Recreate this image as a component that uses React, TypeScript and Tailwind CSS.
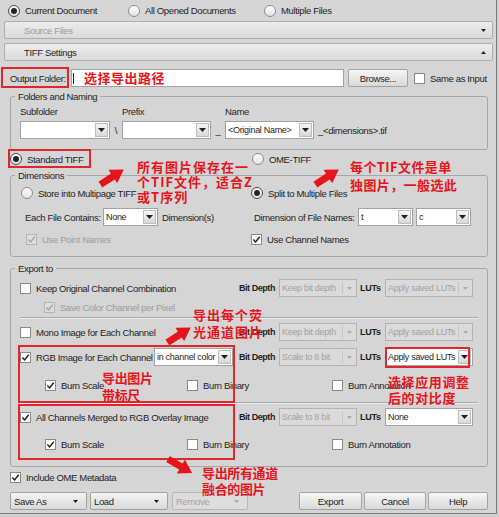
import React from "react";

const cjk = "font-['Noto_Sans_CJK_SC',sans-serif]";

function Tri({ up, color = "#1f1f1f", small }: { up?: boolean; color?: string; small?: boolean }) {
  const w = small ? 5 : 7;
  const h = small ? 3 : 4;
  return (
    <svg width={w} height={h} viewBox={`0 0 ${w} ${h}`}>
      <path d={up ? `M0 ${h}h${w}L${w / 2} 0z` : `M0 0h${w}L${w / 2} ${h}z`} fill={color} />
    </svg>
  );
}

function Radio({ checked, label, className = "" }: { checked?: boolean; label: string; className?: string }) {
  return (
    <div className={`flex items-center gap-[5px] ${className}`}>
      <span
        className={`flex h-[12px] w-[12px] shrink-0 items-center justify-center rounded-full border bg-gradient-to-b from-white to-[#e2e2e2] ${
          checked ? "border-[#4b4b4b]" : "border-[#8e8e8e]"
        }`}
      >
        {checked && <span className="h-[6px] w-[6px] rounded-full bg-[#252525]" />}
      </span>
      <span className="whitespace-nowrap">{label}</span>
    </div>
  );
}

function Check({
  checked,
  disabled,
  label,
  className = "",
}: {
  checked?: boolean;
  disabled?: boolean;
  label: string;
  className?: string;
}) {
  return (
    <div className={`flex h-[12px] items-center gap-[5px] ${className}`}>
      <span
        className={`flex h-[11px] w-[11px] shrink-0 items-center justify-center border ${
          disabled ? "border-[#b5b5b5] bg-[#dddddd]" : "border-[#8a8a8a] bg-white"
        }`}
      >
        {checked && (
          <svg width="9" height="9" viewBox="0 0 9 9">
            <path
              d="M1.4 4.6 3.6 6.9 7.7 1.7"
              fill="none"
              stroke={disabled ? "#a5a5a5" : "#1c1c1c"}
              strokeWidth="1.4"
            />
          </svg>
        )}
      </span>
      <span className={`whitespace-nowrap ${disabled ? "text-[#9d9d9d]" : ""}`}>{label}</span>
    </div>
  );
}

// editable combo: white field + raised button
function Combo({ value, w }: { value: string; w: string }) {
  return (
    <div className={`flex h-[18px] shrink-0 items-stretch border border-[#a2a2a2] bg-white ${w}`}>
      <span className="flex flex-1 items-center overflow-hidden whitespace-nowrap pl-[2px] text-[9px] tracking-[-0.3px]">
        {value}
      </span>
      <span className="m-px flex w-[13px] items-center justify-center border border-[#bdbdbd] bg-gradient-to-b from-[#f6f6f6] to-[#d8d8d8]">
        <Tri />
      </span>
    </div>
  );
}

function DisCombo({ value, w }: { value: string; w: string }) {
  return (
    <div className={`flex h-[18px] shrink-0 items-center border border-[#b3b3b3] bg-[#dadada] text-[#a2a2a2] ${w}`}>
      <span className="flex-1 overflow-hidden whitespace-nowrap pl-[2px] text-[9px] tracking-[-0.3px]">{value}</span>
      <span className="mr-[4px] flex items-center gap-[4px]">
        <span className="h-[12px] w-px bg-[#c6c6c6]" />
        <Tri color="#a9a9a9" small />
      </span>
    </div>
  );
}

function Btn({ children, w, className = "" }: { children: React.ReactNode; w: string; className?: string }) {
  return (
    <div
      className={`flex h-[18px] shrink-0 items-center justify-center rounded-[2px] border border-[#a3a3a3] bg-gradient-to-b from-[#f6f6f6] to-[#d9d9d9] ${w} ${className}`}
    >
      {children}
    </div>
  );
}

function DropBtn({ label, w, disabled, className = "" }: { label: string; w: string; disabled?: boolean; className?: string }) {
  return (
    <div
      className={`flex h-[18px] shrink-0 items-center justify-between rounded-[2px] border pl-[3px] pr-[8px] ${
        disabled
          ? "border-[#b8b8b8] bg-[#dcdcdc] text-[#a4a4a4]"
          : "border-[#a3a3a3] bg-gradient-to-b from-[#f4f4f4] to-[#d9d9d9]"
      } ${w} ${className}`}
    >
      <span>{label}</span>
      <Tri small color={disabled ? "#a8a8a8" : "#1f1f1f"} />
    </div>
  );
}

function BitLuts({ enabled, depth, luts }: { enabled?: boolean; depth: string; luts: string }) {
  return (
    <div className="flex items-center">
      <span className="w-[40px] whitespace-nowrap text-[9px] font-bold tracking-[-0.45px]">Bit Depth</span>
      <DisCombo value={depth} w="w-[78px]" />
      <span className="ml-[3px] w-[25px] text-[9px] font-bold tracking-[-0.3px]">LUTs</span>
      {enabled ? <Combo value={luts} w="w-[88px]" /> : <DisCombo value={luts} w="w-[88px]" />}
    </div>
  );
}

function BurnRow() {
  return (
    <div className="flex h-[12px] items-center pl-[25px]">
      <div className="w-[142px]">
        <Check checked label="Burn Scale" />
      </div>
      <div className="w-[145px]">
        <Check label="Burn Binary" />
      </div>
      <Check label="Burn Annotation" />
    </div>
  );
}

function Separator({ className = "" }: { className?: string }) {
  return <div className={`h-[2px] border-t border-[#a9a9a9] bg-[#ececec] ${className}`} />;
}

function Arrow({ left, top, rot }: { left: number; top: number; rot: string }) {
  return (
    <svg width="28" height="16" viewBox="0 0 28 16" className={`absolute ${rot}`} style={{ left, top }}>
      <polygon points="0,4.5 15,4.5 15,0 28,8 15,16 15,11.5 0,11.5" fill="#e8141c" />
    </svg>
  );
}

export default function App() {
  return (
    <div className="h-[517px] w-[499px] bg-[#cfcfcf]">
      <div className="relative h-[514px] w-[497px] overflow-hidden border-r border-b border-[#7c7c7c] bg-[#d5d5d5] font-['Liberation_Sans',Arial,sans-serif] text-[9.5px] leading-[11px] tracking-[-0.35px] text-[#1e1e1e]">
        {/* document scope */}
        <div className="flex h-[21px] items-center pl-[8px]">
          <Radio checked label="Current Document" className="w-[120px]" />
          <Radio label="All Opened Documents" className="w-[136px]" />
          <Radio label="Multiple Files" />
        </div>

        <div className="mx-[4px] flex h-[18px] w-[489px] items-center justify-between rounded-[2px] border border-[#adadad] bg-gradient-to-b from-[#ececec] to-[#dadada] pl-[19px] pr-[6px]">
          <span className="text-[#9b9b9b]">Source Files</span>
          <Tri small />
        </div>
        <div className="mx-[4px] mt-[4px] flex h-[18px] w-[489px] items-center justify-between rounded-[2px] border border-[#adadad] bg-gradient-to-b from-[#ececec] to-[#dadada] pl-[19px] pr-[6px]">
          <span>TIFF Settings</span>
          <Tri small up />
        </div>

        {/* output folder */}
        <div className="mt-[8px] flex h-[18px] items-center">
          <span className="w-[71px] whitespace-nowrap pl-[10px]">Output Folder:</span>
          <div className="flex h-[18px] w-[273px] items-center border border-[#a2a2a2] bg-white">
            <span className="ml-px h-[11px] w-px bg-[#222]" />
          </div>
          <Btn w="w-[60px]" className="ml-[4px]">
            Browse...
          </Btn>
          <Check label="Same as Input" className="ml-[6px]" />
        </div>

        {/* folders and naming */}
        <fieldset className="mx-[10px] mt-[4px] w-[478px] rounded-[3px] border border-[#a7a7a7] px-[9px] pb-[10px]">
          <legend className="-ml-[5px] px-[3px] leading-[11px]">Folders and Naming</legend>
          <div className="mt-[4px] flex">
            <span className="w-[102px]">Subfolder</span>
            <span className="w-[103px]">Prefix</span>
            <span>Name</span>
          </div>
          <div className="mt-[4px] flex items-center">
            <Combo value="" w="w-[90px]" />
            <span className="w-[12px] text-center">\</span>
            <Combo value="" w="w-[89px]" />
            <span className="w-[14px] text-center">_</span>
            <Combo value="<Original Name>" w="w-[89px]" />
            <span className="ml-[4px]">_&lt;dimensions&gt;.tif</span>
          </div>
        </fieldset>

        {/* tiff type */}
        <div className="mt-[1px] flex h-[16px] items-center pl-[10px]">
          <Radio checked label="Standard TIFF" className="w-[242px]" />
          <Radio label="OME-TIFF" />
        </div>

        {/* dimensions */}
        <fieldset className="mx-[10px] mt-[3px] w-[478px] rounded-[3px] border border-[#a7a7a7] pl-[10px] pr-[9px] pb-[11px]">
          <legend className="-ml-[6px] px-[3px] leading-[11px]">Dimensions</legend>
          <div className="mt-[4px] flex h-[16px] items-center">
            <Radio label="Store into Multipage TIFF" className="w-[230px]" />
            <Radio checked label="Split to Multiple Files" />
          </div>
          <div className="mt-[7px] flex h-[18px] items-center">
            <div className="flex w-[230px] items-center">
              <span className="w-[82px] whitespace-nowrap pl-[4px]">Each File Contains:</span>
              <Combo value="None" w="w-[55px]" />
              <span className="ml-[4px]">Dimension(s)</span>
            </div>
            <span className="w-[107px] whitespace-nowrap pl-[3px]">Dimension of File Names:</span>
            <Combo value="t" w="w-[55px]" />
            <div className="ml-[3px]">
              <Combo value="c" w="w-[55px]" />
            </div>
          </div>
          <div className="mt-[7px] flex h-[12px] items-center">
            <div className="w-[230px] pl-[5px]">
              <Check checked disabled label="Use Point Names" />
            </div>
            <Check checked label="Use Channel Names" />
          </div>
        </fieldset>

        {/* export to */}
        <fieldset className="mx-[10px] mt-[6px] w-[478px] rounded-[3px] border border-[#a7a7a7] px-[9px] pb-[16px]">
          <legend className="-ml-[5px] px-[3px] leading-[11px]">Export to</legend>

          <div className="mt-[5px] flex h-[18px] items-center">
            <div className="w-[219px]">
              <Check label="Keep Original Channel Combination" />
            </div>
            <BitLuts depth="Keep bit depth" luts="Apply saved LUTs" />
          </div>
          <Check checked disabled label="Save Color Channel per Pixel" className="mt-[4px] pl-[24px]" />
          <Separator className="mt-[4px]" />

          <div className="mt-[4px] flex h-[18px] items-center">
            <div className="w-[219px]">
              <Check label="Mono Image for Each Channel" />
            </div>
            <BitLuts depth="Keep bit depth" luts="Apply saved LUTs" />
          </div>

          <div className="mt-[7px] flex h-[18px] items-center">
            <div className="flex w-[219px] items-center justify-between pr-[6px]">
              <Check checked label="RGB Image for Each Channel" />
              <Combo value="in channel color" w="w-[79px]" />
            </div>
            <BitLuts enabled depth="Scale to 8 bit" luts="Apply saved LUTs" />
          </div>
          <div className="mt-[13px]">
            <BurnRow />
          </div>
          <Separator className="mt-[11px]" />

          <div className="mt-[4px] flex h-[18px] items-center">
            <div className="w-[219px]">
              <Check checked label="All Channels Merged to RGB Overlay Image" />
            </div>
            <BitLuts enabled depth="Scale to 8 bit" luts="None" />
          </div>
          <div className="mt-[12px]">
            <BurnRow />
          </div>
        </fieldset>

        <Check checked label="Include OME Metadata" className="mt-[4px] pl-[10px]" />

        {/* bottom buttons */}
        <div className="mt-[9px] flex items-center pl-[10px]">
          <DropBtn label="Save As" w="w-[77px]" />
          <DropBtn label="Load" w="w-[78px]" className="ml-[3px]" />
          <DropBtn label="Remove" w="w-[76px]" disabled className="ml-[4px]" />
          <Btn w="w-[63px]" className="ml-[51px]">
            Export
          </Btn>
          <Btn w="w-[62px]" className="ml-[2px]">
            Cancel
          </Btn>
          <Btn w="w-[60px]" className="ml-[2px]">
            Help
          </Btn>
        </div>

        {/* annotations */}
        <div className="pointer-events-none absolute left-[1px] top-[67px] h-[21px] w-[68px] border-2 border-[#df262c]" />
        <div className="pointer-events-none absolute left-[8px] top-[149px] h-[19px] w-[83px] border-2 border-[#df262c]" />
        <div className="pointer-events-none absolute left-[18px] top-[345px] h-[58px] w-[217px] border-2 border-[#df262c]" />
        <div className="pointer-events-none absolute left-[18px] top-[404px] h-[56px] w-[217px] border-2 border-[#df262c]" />
        <div className="pointer-events-none absolute left-[385px] top-[347px] h-[21px] w-[85px] border-2 border-[#df262c]" />

        <div className={`absolute left-[84px] top-[70px] whitespace-nowrap text-[13px] font-bold leading-[16px] tracking-[0.5px] text-[#e8141c] ${cjk}`}>
          选择导出路径
        </div>
        <div className={`absolute left-[137px] top-[159px] whitespace-nowrap text-[13px] font-bold leading-[15px] tracking-[1px] text-[#e8141c] ${cjk}`}>
          <div>所有图片保存在一</div>
          <div>个TIF文件，适合Z</div>
          <div>或T序列</div>
        </div>
        <div className={`absolute left-[350px] top-[158px] whitespace-nowrap text-[13px] font-bold leading-[18px] tracking-[0.4px] text-[#e8141c] ${cjk}`}>
          <div>每个TIF文件是单</div>
          <div>独图片，一般选此</div>
        </div>
        <div className={`absolute left-[193px] top-[306px] whitespace-nowrap text-[13px] font-bold leading-[17px] tracking-[1px] text-[#e8141c] ${cjk}`}>
          <div>导出每个荧</div>
          <div>光通道图片</div>
        </div>
        <div className={`absolute left-[102px] top-[369px] whitespace-nowrap text-[13px] font-bold leading-[17px] text-[#e8141c] ${cjk}`}>
          <div>导出图片</div>
          <div>带标尺</div>
        </div>
        <div className={`absolute left-[388px] top-[374px] whitespace-nowrap text-[13px] font-bold leading-[16px] tracking-[0.6px] text-[#e8141c] ${cjk}`}>
          <div>选择应用调整</div>
          <div>后的对比度</div>
        </div>
        <div className={`absolute left-[202px] top-[465px] whitespace-nowrap text-[13px] font-bold leading-[16px] text-[#e8141c] ${cjk}`}>
          <div>导出所有通道</div>
          <div>融合的图片</div>
        </div>

        <Arrow left={98} top={169} rot="-rotate-[33deg]" />
        <Arrow left={313} top={169} rot="-rotate-[33deg]" />
        <Arrow left={165} top={327} rot="-rotate-[33deg]" />
        <Arrow left={166} top={458} rot="rotate-[30deg]" />
      </div>
    </div>
  );
}
